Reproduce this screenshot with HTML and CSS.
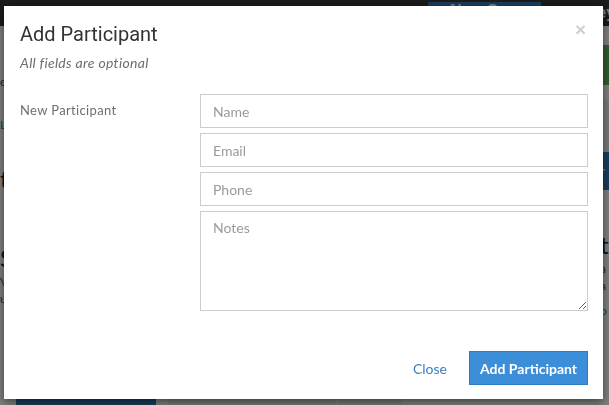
FILE: index.html
```html
<!DOCTYPE html>
<html lang="en">
<head>
    <meta charset="UTF-8">
    <meta name="viewport" content="width=device-width, initial-scale=1.0">
    <title>Add Participant</title>
    <link rel="stylesheet" href="styles.css">
</head>
<body>
    <nav class="nav">
        <div class="nav-content">
            <a href="#" class="nav-btn">New Survey</a>
            <a href="#" class="nav-link">Surveys</a>
        </div>
    </nav>

    <div class="page">
        <div class="page-left">
            <p class="crumb">e</p>
            <a href="#" class="side-link">L</a>
            <h2 class="side-title">t</h2>
            <h2 class="side-title lower">S</h2>
            <p class="side-text">V</p>
            <p class="side-text">u</p>
        </div>
        <div class="page-right">
            <div class="alert-band"></div>
            <div class="light-band"></div>
            <div class="blue-band">r</div>
            <h2 class="right-title">t</h2>
            <p class="right-text">a</p>
            <p class="right-text">a</p>
            <a href="#" class="right-link">o</a>
        </div>
    </div>
    <div class="page-bottom">
        <div class="tab-blue"></div>
        <div class="tab-gray"></div>
        <div class="tab-gray small"></div>
    </div>

    <div class="backdrop"></div>

    <div class="modal">
        <div class="modal-dialog">
            <div class="modal-header">
                <button type="button" class="close">&times;</button>
                <h4 class="modal-title">Add Participant</h4>
                <p class="modal-sub">All fields are optional</p>
            </div>
            <form class="modal-body">
                <label class="field-label">New Participant</label>
                <div class="fields">
                    <input type="text" class="form-control" placeholder="Name">
                    <input type="text" class="form-control" placeholder="Email">
                    <input type="text" class="form-control" placeholder="Phone">
                    <textarea class="form-control notes" placeholder="Notes"></textarea>
                </div>
            </form>
            <div class="modal-footer">
                <a href="#" class="btn-link">Close</a>
                <button type="button" class="btn-primary">Add Participant</button>
            </div>
        </div>
    </div>
</body>
</html>
```

FILE: styles.css
```css
:root {
    --primary: #3d8ed8;
    --primary-dark: #2f7dc6;
    --link: #3a7fc6;
    --text: #333333;
    --text-light: #6e6e6e;
    --placeholder: #9a9a9a;
    --border: #cccccc;
    --white: #FFFFFF;
}

* {
    margin: 0;
    padding: 0;
    box-sizing: border-box;
}

body {
    font-family: Lato, 'Open Sans', sans-serif;
    background-color: var(--white);
    color: var(--text);
    width: 609px;
    height: 405px;
    overflow: hidden;
}

/* page behind the modal */
.nav {
    background-color: #363636;
    height: 26px;
}

.nav-content {
    display: flex;
    align-items: flex-end;
    height: 100%;
    padding-left: 428px;
}

.nav-btn {
    background-color: #337ab7;
    color: var(--white);
    width: 113px;
    padding: 2px 0 2px 22px;
    font-family: 'Liberation Sans', Arial, sans-serif;
    font-weight: bold;
    font-size: 16px;
    white-space: nowrap;
    text-decoration: none;
    line-height: 14px;
    margin-bottom: 6px;
}

.nav-link {
    color: var(--white);
    margin-left: 21px;
    font-family: 'Liberation Sans', Arial, sans-serif;
    font-weight: bold;
    font-size: 16px;
    white-space: nowrap;
    text-decoration: none;
    line-height: 14px;
    margin-bottom: 6px;
}

.page {
    display: flex;
    justify-content: space-between;
    height: 350px;
}

.page-left {
    width: 12px;
    padding-top: 48px;
}

.crumb {
    font-size: 12px;
    color: #555;
}

.side-link {
    display: block;
    margin-top: 28px;
    font-size: 12px;
    color: var(--link);
    text-decoration: none;
}

.side-title {
    margin-top: 32px;
    font-size: 24px;
    font-weight: normal;
    color: #222;
}

.side-title.lower {
    margin-top: 50px;
}

.side-text {
    font-size: 12px;
    color: #555;
    margin-top: 2px;
}

.page-right {
    width: 9px;
    padding-top: 19px;
}

.alert-band {
    height: 40px;
    background-color: #5cb85c;
}

.light-band {
    height: 52px;
    margin-top: 15px;
    background-color: #f2f2f2;
}

.blue-band {
    height: 38px;
    background-color: #337ab7;
    color: var(--white);
    font-size: 14px;
    padding: 10px 0 0 0;
}

.right-title {
    margin-top: 40px;
    font-size: 24px;
    font-weight: normal;
    color: #222;
}

.right-text {
    font-size: 12px;
    color: #555;
    margin-top: 2px;
}

.right-link {
    display: block;
    margin-top: 10px;
    font-size: 12px;
    color: var(--link);
    text-decoration: none;
}

.page-bottom {
    display: flex;
    gap: 2px;
    padding-left: 16px;
}

.tab-blue {
    width: 140px;
    height: 40px;
    background-color: #337ab7;
}

.tab-gray {
    width: 168px;
    height: 40px;
    margin-left: 10px;
    background-color: #f0f0f0;
}

.tab-gray.small {
    width: 64px;
    margin-left: 0;
}

.backdrop {
    position: fixed;
    inset: 0;
    background-color: rgba(0, 0, 0, 0.5);
}

/* modal */
.modal {
    position: fixed;
    inset: 0;
}

.modal-dialog {
    width: 599px;
    margin: 6px auto 0 4px;
    background: var(--white);
    box-shadow: 0 3px 9px rgba(0, 0, 0, 0.5);
}

.modal-header {
    position: relative;
    padding: 17px 15px 0 16px;
}

.modal-title {
    font-family: Roboto, sans-serif;
    font-size: 20px;
    font-weight: normal;
    line-height: 22px;
    color: var(--text);
}

.modal-sub {
    margin-top: 9px;
    font-size: 14px;
    font-style: italic;
    letter-spacing: 0.3px;
    color: var(--text-light);
    line-height: 18px;
}

.close {
    position: absolute;
    top: 14px;
    right: 17px;
    background: none;
    border: none;
    font-family: 'Liberation Sans', Arial, sans-serif;
    font-size: 19px;
    font-weight: bold;
    line-height: 1;
    color: #d0d0d0;
    cursor: pointer;
}

.modal-body {
    display: grid;
    grid-template-columns: 180px 1fr;
    padding: 22px 15px 0 16px;
}

.field-label {
    font-size: 13px;
    letter-spacing: 0.35px;
    color: var(--text-light);
    padding-top: 7px;
    line-height: 18px;
}

.fields {
    display: flex;
    flex-direction: column;
    gap: 5px;
}

.form-control {
    width: 100%;
    height: 34px;
    padding: 0 12px;
    border: 1px solid var(--border);
    border-radius: 0;
    font-family: Lato, 'Open Sans', sans-serif;
    font-size: 14px;
    color: var(--text);
    background: var(--white);
}

.form-control::placeholder {
    color: var(--placeholder);
}

.form-control.notes {
    height: 100px;
    padding: 7px 12px;
    resize: vertical;
}

.modal-footer {
    display: flex;
    justify-content: flex-end;
    align-items: center;
    gap: 22px;
    padding: 40px 15px 14px 15px;
}

.btn-link {
    font-size: 14px;
    color: var(--link);
    text-decoration: none;
}

.btn-primary {
    width: 119px;
    height: 34px;
    background-color: var(--primary);
    border: 1px solid var(--primary-dark);
    color: var(--white);
    font-family: Lato, 'Open Sans', sans-serif;
    font-size: 14px;
    font-weight: bold;
    cursor: pointer;
}
```
